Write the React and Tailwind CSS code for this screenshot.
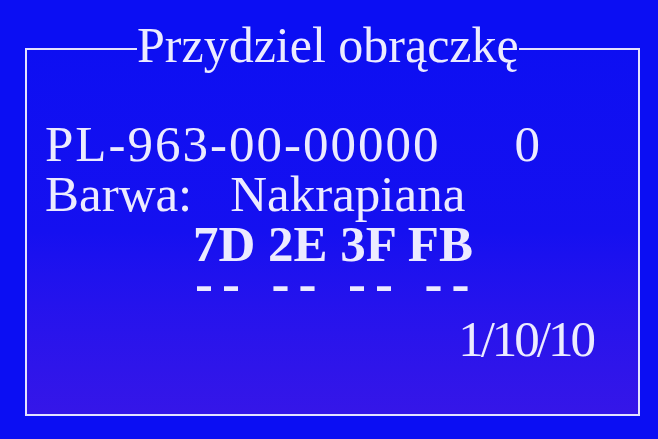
const App = () => {
  return (
    <div
      className="w-[658px] h-[439px] overflow-hidden bg-[#0b0ef3] pt-[20px] pl-[25px] pr-[18px] text-[#ecebff]"
      style={{ fontFamily: '"Liberation Serif", "Times New Roman", serif' }}
    >
      <fieldset className="h-[396px] border-2 border-[#e4e2ff] px-0 pt-0 bg-gradient-to-b from-[#0d0ff2] via-[#1510f0] to-[#3516e8]">
        <legend className="ml-[110px] px-0 pb-[7px] text-[50px] leading-[50px]">
          Przydziel obrączkę
        </legend>

        <div className="mt-[42px] pl-[18px] text-[51px] leading-[50px]">
          {/* ring number + counter */}
          <div className="flex h-[50px]">
            <span className="tracking-[2px]">PL-963-00-00000</span>
            <span className="ml-[74px]">0</span>
          </div>
          <div className="flex h-[50px]">
            <span>Barwa:</span>
            <span className="ml-[38px]">Nakrapiana</span>
          </div>
          {/* chip bytes */}
          <div className="h-[50px] pl-[148px] font-bold">7D 2E 3F FB</div>
          <div className="h-[30px] leading-[30px] pl-[150px] text-[54px] font-bold tracking-[9px] whitespace-pre">
            -- -- -- --
          </div>
        </div>

        <div className="mt-[15px] pr-[45px] text-right text-[51px] leading-[50px] tracking-[-3px]">
          1/10/10
        </div>
      </fieldset>
    </div>
  );
};

export default App;
